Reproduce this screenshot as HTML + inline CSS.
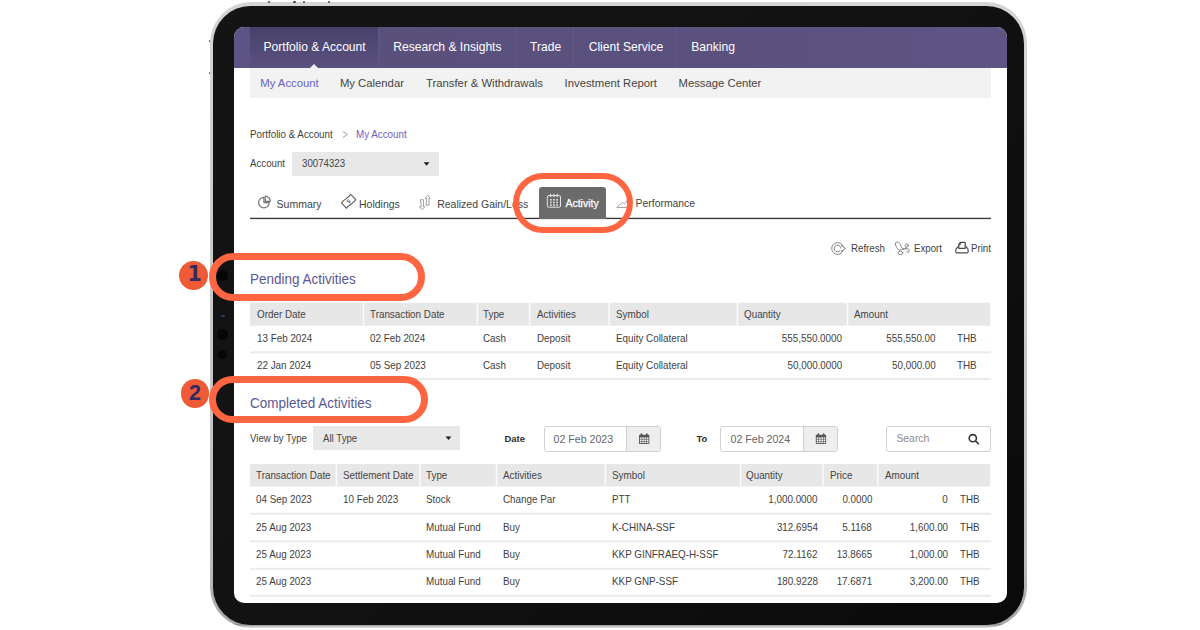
<!DOCTYPE html>
<html lang="en">
<head>
<meta charset="utf-8">
<title>Activity</title>
<style>
*{box-sizing:border-box;margin:0;padding:0}
html,body{width:1200px;height:630px;overflow:hidden;background:#fff}
body{position:relative;font-family:"Liberation Sans",sans-serif;color:#3f3f3f;font-size:9.85px}
.abs{position:absolute}
.t{position:absolute;white-space:nowrap;line-height:1;transform:translateY(-50%) scaleX(var(--sx,1));transform-origin:left center}
.n{font-size:10.3px;--sx:.956}
/* device */
#dev-outer{left:209.6px;top:1.8px;width:817.5px;height:626.7px;border-radius:41px;background:linear-gradient(180deg,#d3d5d6 0%,#c6c8c9 55%,#b9bbbd 90%,#a4a6a8 99.3%,#8f9193 99.45%,#e6e6e6 100%)}
#dev-black{left:213.4px;top:5.8px;width:810.4px;height:619px;border-radius:37.5px;background:linear-gradient(135deg,#141414 0%,#121212 45%,#0a0a0a 100%)}
#screen{left:234px;top:27px;width:773px;height:576px;border-radius:10px;background:#fff;overflow:hidden}
/* inside screen coordinates are page coords minus (234,27); use wrapper shifted */
#pg{position:absolute;left:-234px;top:-27px;width:1200px;height:630px}
#nav{left:234px;top:27px;width:773px;height:40.6px;background:linear-gradient(90deg,#5d5485 0,#5d5485 16px,#5a507c 150px,#5b517e 520px,#5e5585 100%)}
#nav .tab{position:absolute;top:0;height:41px;border-right:1px solid #61578a}
#nav .act{background:linear-gradient(180deg,#47416a 0%,#5b5180 100%);border-right:1px solid #61578a}
#nav .t{color:#fff;font-size:12.1px;top:20px}
#sub{left:250px;top:68px;width:741px;height:30px;background:#f2f2f2}
#sub .t{font-size:11.3px;top:15.8px;color:#444}
.pur{color:#6a5fc4 !important}
.c{color:#444}
.r{text-align:right;transform-origin:right center}
.ring{position:absolute;border:7.2px solid #ff6540;border-radius:32px}
.badge{position:absolute;width:29px;height:29px;border-radius:50%;background:#ee5b36;color:#342a62;font-weight:700;font-size:20px;text-align:center;line-height:28px;text-indent:3.4px;font-family:"DejaVu Sans","Liberation Sans",sans-serif}
.inp{position:absolute;border:1px solid #d0d0d0;border-radius:3px;background:#fff;height:26px;top:426px}
.addon{position:absolute;top:0;bottom:0;right:0;background:#eee;border-left:1px solid #d0d0d0;border-radius:0 2px 2px 0}
</style>
</head>
<body>
<div class="abs" id="dev-outer"></div>
<div class="abs" id="dev-black"></div>
<div class="abs" style="left:217px;top:270.1px;width:11px;height:11px;border-radius:50%;background:#060606"></div>
<div class="abs" style="left:218.2px;top:349.9px;width:9px;height:9px;border-radius:50%;background:#070707"></div>
<div class="abs" style="left:217px;top:329.1px;width:11px;height:11px;border-radius:50%;background:#060606"></div>
<div class="abs" style="left:221.2px;top:314.6px;width:3.6px;height:2px;background:#1d3e6e;border-radius:1px"></div>
<div class="abs" style="left:267.7px;top:1.4px;width:2.2px;height:1.8px;background:#444;border-radius:1px"></div>
<div class="abs" style="left:293.4px;top:1.4px;width:2.2px;height:1.8px;background:#444;border-radius:1px"></div>
<div class="abs" style="left:302.7px;top:1.4px;width:2.2px;height:1.8px;background:#444;border-radius:1px"></div>
<div class="abs" style="left:328.3px;top:1.4px;width:2.2px;height:1.8px;background:#444;border-radius:1px"></div>
<div class="abs" style="left:208.9px;top:40.4px;width:1.6px;height:2px;background:#555;border-radius:1px"></div>
<div class="abs" style="left:208.9px;top:72px;width:1.6px;height:2px;background:#555;border-radius:1px"></div>
<div class="abs" id="screen"><div id="pg">
<svg class="abs" style="left:0;top:0" width="1200" height="630" viewBox="0 0 1200 630">
<!-- dividers -->
<g stroke="none">
<rect x="250" y="217.75" width="741" height="1.35" fill="#383838"/>
<rect x="250" y="302.8" width="740.2" height="22.8" fill="#e7e7e7"/>
<rect x="362.75" y="302.3" width="1.5" height="23.8" fill="#fbfbfb"/>
<rect x="476.55" y="302.3" width="1.5" height="23.8" fill="#fbfbfb"/>
<rect x="528.95" y="302.3" width="1.5" height="23.8" fill="#fbfbfb"/>
<rect x="608.45" y="302.3" width="1.5" height="23.8" fill="#fbfbfb"/>
<rect x="736.65" y="302.3" width="1.5" height="23.8" fill="#fbfbfb"/>
<rect x="846.75" y="302.3" width="1.5" height="23.8" fill="#fbfbfb"/>
<rect x="250" y="463.9" width="740.2" height="22.5" fill="#e7e7e7"/>
<rect x="335.55" y="463.4" width="1.5" height="23.5" fill="#fbfbfb"/>
<rect x="419.25" y="463.4" width="1.5" height="23.5" fill="#fbfbfb"/>
<rect x="495.75" y="463.4" width="1.5" height="23.5" fill="#fbfbfb"/>
<rect x="604.55" y="463.4" width="1.5" height="23.5" fill="#fbfbfb"/>
<rect x="739.85" y="463.4" width="1.5" height="23.5" fill="#fbfbfb"/>
<rect x="822.15" y="463.4" width="1.5" height="23.5" fill="#fbfbfb"/>
<rect x="877.05" y="463.4" width="1.5" height="23.5" fill="#fbfbfb"/>
<rect x="250" y="351.3" width="741" height="2" fill="#ebebeb"/>
<rect x="250" y="378.0" width="741" height="2" fill="#ebebeb"/>
<rect x="250" y="512.8" width="741" height="2" fill="#ebebeb"/>
<rect x="250" y="540.3" width="741" height="2" fill="#ebebeb"/>
<rect x="250" y="567.8" width="741" height="2" fill="#ebebeb"/>
<rect x="250" y="594.8" width="741" height="2" fill="#ebebeb"/>
</g>
</svg>

<!-- NAV -->
<div class="abs" id="nav">
  <div class="tab act" style="left:16px;width:129px"><span class="t" style="left:13.5px">Portfolio &amp; Account</span>
    <div style="position:absolute;left:60px;bottom:0;width:0;height:0;border-left:4.5px solid transparent;border-right:4.5px solid transparent;border-bottom:4.5px solid #f2f2f2"></div></div>
  <div class="tab" style="left:145px;width:137px"><span class="t" style="left:14.3px">Research &amp; Insights</span></div>
  <div class="tab" style="left:282px;width:58px"><span class="t" style="left:14px">Trade</span></div>
  <div class="tab" style="left:340px;width:103px"><span class="t" style="left:14.7px">Client Service</span></div>
  <div class="tab" style="left:443px;width:72px;border-right:none"><span class="t" style="left:14.3px">Banking</span></div>
</div>
<div class="abs" id="sub">
  <span class="t pur" style="left:10.3px">My Account</span>
  <span class="t" style="left:89.9px">My Calendar</span>
  <span class="t" style="left:176px">Transfer &amp; Withdrawals</span>
  <span class="t" style="left:314.6px">Investment Report</span>
  <span class="t" style="left:428.5px">Message Center</span>
</div>

<!-- BREADCRUMB -->
<span class="t" style="left:249.8px;top:135px;font-size:10.3px;--sx:.951">Portfolio &amp; Account</span>
<span class="t pur" style="left:355.5px;top:135px;font-size:10.3px;--sx:.951">My Account</span>

<!-- ACCOUNT SELECT -->
<span class="t" style="left:250px;top:164.2px;font-size:10.2px;--sx:.95">Account</span>
<div class="abs" style="left:292px;top:152px;width:147px;height:24px;background:#e8e8e8"></div>
<span class="t" style="left:301.8px;top:164.2px;font-size:10.2px;--sx:.95;color:#444">30074323</span>

<!-- TABS -->
<span class="t" style="left:276.6px;top:204px;font-size:10.5px;color:#424242">Summary</span>
<span class="t" style="left:359px;top:204px;font-size:10.5px;color:#424242">Holdings</span>
<span class="t" style="left:437.2px;top:204px;font-size:10.5px;color:#424242">Realized Gain/Loss</span>
<div class="abs" style="left:539px;top:187px;width:67px;height:31.5px;background:#6b6b6b;border-radius:3px 3px 0 0"></div>
<span class="t" style="left:565.4px;top:202.8px;font-size:10.5px;color:#fff;-webkit-text-stroke:0.25px #fff">Activity</span>
<span class="t" style="left:635.6px;top:204px;font-size:10.4px;color:#424242">Performance</span>

<!-- TOOLBAR -->
<span class="t" style="left:850.7px;top:248.7px;font-size:10.1px;--sx:.96;color:#424242">Refresh</span>
<span class="t" style="left:914.2px;top:248.7px;font-size:10.1px;--sx:.96;color:#424242">Export</span>
<span class="t" style="left:971.2px;top:248.7px;font-size:10.1px;--sx:.96;color:#424242">Print</span>

<!-- PENDING -->
<span class="t" style="left:250px;top:278.5px;font-size:14px;--sx:.964;color:#5b5795">Pending Activities</span>

<span class="n t c" style="left:256.5px;top:314.5px">Order Date</span>
<span class="n t c" style="left:369.8px;top:314.5px">Transaction Date</span>
<span class="n t c" style="left:483.2px;top:314.5px">Type</span>
<span class="n t c" style="left:536.7px;top:314.5px">Activities</span>
<span class="n t c" style="left:615.7px;top:314.5px">Symbol</span>
<span class="n t c" style="left:744px;top:314.5px">Quantity</span>
<span class="n t c" style="left:854.3px;top:314.5px">Amount</span>

<span class="n t" style="left:256.5px;top:338.6px">13 Feb 2024</span>
<span class="n t" style="left:369.8px;top:338.6px">02 Feb 2024</span>
<span class="n t" style="left:483.2px;top:338.6px">Cash</span>
<span class="n t" style="left:536.7px;top:338.6px">Deposit</span>
<span class="n t" style="left:615.7px;top:338.6px">Equity Collateral</span>
<span class="n t r" style="right:357.7px;top:338.6px">555,550.0000</span>
<span class="n t r" style="right:264px;top:338.6px">555,550.00</span>
<span class="n t" style="left:956.6px;top:338.6px">THB</span>
<span class="n t" style="left:256.5px;top:365.5px">22 Jan 2024</span>
<span class="n t" style="left:369.8px;top:365.5px">05 Sep 2023</span>
<span class="n t" style="left:483.2px;top:365.5px">Cash</span>
<span class="n t" style="left:536.7px;top:365.5px">Deposit</span>
<span class="n t" style="left:615.7px;top:365.5px">Equity Collateral</span>
<span class="n t r" style="right:357.7px;top:365.5px">50,000.0000</span>
<span class="n t r" style="right:264px;top:365.5px">50,000.00</span>
<span class="n t" style="left:956.6px;top:365.5px">THB</span>

<!-- COMPLETED -->
<span class="t" style="left:250px;top:402.7px;font-size:14px;--sx:.964;color:#5b5795">Completed Activities</span>
<span class="t" style="left:250px;top:438.6px;font-size:10.1px;--sx:.955">View by Type</span>
<div class="abs" style="left:313px;top:426.2px;width:147.4px;height:24.3px;background:#e8e8e8"></div>
<span class="t" style="left:322.8px;top:438.6px;font-size:10.2px;--sx:.95;color:#444">All Type</span>

<span class="t" style="left:504.6px;top:438.5px;font-size:9.4px;font-weight:700;color:#2e2e2e">Date</span>
<div class="inp" style="left:543.5px;width:117.7px"><div class="addon" style="width:34px"></div></div>
<span class="t" style="left:553.6px;top:439px;font-size:10.6px;color:#666">02 Feb 2023</span>
<span class="t" style="left:696.5px;top:438.5px;font-size:9.4px;font-weight:700;color:#2e2e2e">To</span>
<div class="inp" style="left:720px;width:118px"><div class="addon" style="width:34px"></div></div>
<span class="t" style="left:730.6px;top:439px;font-size:10.6px;color:#666">02 Feb 2024</span>
<div class="inp" style="left:886px;width:104.6px"></div>
<span class="t" style="left:896.4px;top:439px;font-size:10.4px;color:#8a8a8a">Search</span>

<span class="n t c" style="left:256.4px;top:475.7px">Transaction Date</span>
<span class="n t c" style="left:343.4px;top:475.7px">Settlement Date</span>
<span class="n t c" style="left:426.4px;top:475.7px">Type</span>
<span class="n t c" style="left:502.8px;top:475.7px">Activities</span>
<span class="n t c" style="left:611.7px;top:475.7px">Symbol</span>
<span class="n t c" style="left:745.8px;top:475.7px">Quantity</span>
<span class="n t c" style="left:830px;top:475.7px">Price</span>
<span class="n t c" style="left:884.6px;top:475.7px">Amount</span>

<span class="n t" style="left:256.4px;top:499.5px">04 Sep 2023</span>
<span class="n t" style="left:343.4px;top:499.5px">10 Feb 2023</span>
<span class="n t" style="left:426.4px;top:499.5px">Stock</span>
<span class="n t" style="left:502.8px;top:499.5px">Change Par</span>
<span class="n t" style="left:611.7px;top:499.5px">PTT</span>
<span class="n t r" style="right:382.5px;top:499.5px">1,000.0000</span>
<span class="n t r" style="right:328px;top:499.5px">0.0000</span>
<span class="n t r" style="right:252px;top:499.5px">0</span>
<span class="n t" style="left:960.4px;top:499.5px">THB</span>

<span class="n t" style="left:256.4px;top:527.6px">25 Aug 2023</span>
<span class="n t" style="left:426.4px;top:527.6px">Mutual Fund</span>
<span class="n t" style="left:502.8px;top:527.6px">Buy</span>
<span class="n t" style="left:611.7px;top:527.6px">K-CHINA-SSF</span>
<span class="n t r" style="right:382.5px;top:527.6px">312.6954</span>
<span class="n t r" style="right:328px;top:527.6px">5.1168</span>
<span class="n t r" style="right:252px;top:527.6px">1,600.00</span>
<span class="n t" style="left:960.4px;top:527.6px">THB</span>

<span class="n t" style="left:256.4px;top:554.5px">25 Aug 2023</span>
<span class="n t" style="left:426.4px;top:554.5px">Mutual Fund</span>
<span class="n t" style="left:502.8px;top:554.5px">Buy</span>
<span class="n t" style="left:611.7px;top:554.5px">KKP GINFRAEQ-H-SSF</span>
<span class="n t r" style="right:382.5px;top:554.5px">72.1162</span>
<span class="n t r" style="right:328px;top:554.5px">13.8665</span>
<span class="n t r" style="right:252px;top:554.5px">1,000.00</span>
<span class="n t" style="left:960.4px;top:554.5px">THB</span>

<span class="n t" style="left:256.4px;top:581.8px">25 Aug 2023</span>
<span class="n t" style="left:426.4px;top:581.8px">Mutual Fund</span>
<span class="n t" style="left:502.8px;top:581.8px">Buy</span>
<span class="n t" style="left:611.7px;top:581.8px">KKP GNP-SSF</span>
<span class="n t r" style="right:382.5px;top:581.8px">180.9228</span>
<span class="n t r" style="right:328px;top:581.8px">17.6871</span>
<span class="n t r" style="right:252px;top:581.8px">3,200.00</span>
<span class="n t" style="left:960.4px;top:581.8px">THB</span>


<!-- ICONS -->
<svg class="abs" style="left:0;top:0" width="1200" height="630" viewBox="0 0 1200 630" fill="none" stroke-linecap="round" stroke-linejoin="round">
<polygon points="423.6,162.2 429.5,162.2 426.55,165.7" fill="#1e1e1e" stroke="none"/>
<polygon points="445.5,436.6 451.4,436.6 448.45,440.1" fill="#1e1e1e" stroke="none"/>
<path d="M343.2 131.7 L347.4 134.5 L343.2 137.3" stroke="#9a9a9a" stroke-width="0.9"/>
<!-- summary pie -->
<g stroke="#737373" stroke-width="1.2">
<path d="M263.9 197.3 A5.3 5.3 0 1 0 269.2 202.6 L263.9 202.6 Z"/>
<path d="M265.2 196.2 A5.2 5.2 0 0 1 270.4 201.4 L265.2 201.4 Z"/>
</g>
<!-- holdings banknote -->
<g transform="translate(348.65 201.3) rotate(-43)" stroke="#5e5e5e" stroke-width="1.1">
<path d="M-6.3 -3.7 C-2.5 -5.2 2.5 -2.2 6.3 -3.7 L6.3 3.7 C2.5 5.2 -2.5 2.2 -6.3 3.7 Z"/>
<text x="0" y="2" font-size="5.6" font-weight="700" font-family="Liberation Sans, sans-serif" text-anchor="middle" fill="#666" stroke="none">$</text>
</g>
<!-- realized arrows -->
<g stroke="#a2a2a2" stroke-width="1">
<path d="M420.85 199.7 L423.45 199.7 L423.45 206.8 L424.8 206.8 L422.15 209.8 L419.5 206.8 L420.85 206.8 Z"/>
<path d="M426.4 205.2 L429 205.2 L429 198.3 L430.3 198.3 L427.7 195.3 L425.1 198.3 L426.4 198.3 Z"/>
</g>
<!-- activity calendar -->
<g stroke="#e6e6e6" stroke-width="1">
<rect x="547.3" y="195.6" width="13.2" height="11.6" rx="1.2"/>
<path d="M550.6 194.4v2.2M553.9 194.4v2.2M557.2 194.4v2.2" stroke-width="1.2"/>
</g>
<g fill="#e0e0e0">
<rect x="550" y="199" width="1.7" height="1.6"/><rect x="553.1" y="199" width="1.7" height="1.6"/><rect x="556.2" y="199" width="1.7" height="1.6"/>
<rect x="550" y="201.6" width="1.7" height="1.6"/><rect x="553.1" y="201.6" width="1.7" height="1.6"/><rect x="556.2" y="201.6" width="1.7" height="1.6"/>
<rect x="550" y="204.2" width="1.7" height="1.6"/><rect x="553.1" y="204.2" width="1.7" height="1.6"/><rect x="556.2" y="204.2" width="1.7" height="1.6"/>
</g>
<!-- performance chart -->
<path d="M617 207.2 L622.6 202.4 L624.4 203.8 L628.2 199.6 L630 207.2 Z" stroke="#9a9a9a" stroke-width="0.9"/>
<!-- refresh -->
<g stroke="#808080" stroke-width="1">
<circle cx="837.6" cy="248.5" r="5.9"/>
<path d="M841 248.4 A3.4 3.4 0 1 0 840 250.9"/>
<path d="M841.4 245.6 L845.6 248.5 L841.4 251" fill="#fff"/>
</g>
<!-- export -->
<g stroke="#858585" stroke-width="1">
<path d="M895.3 243.7 C895.3 242.4 896.4 242 897.3 242.1 C898.8 242.3 899.6 243.2 900.2 244.3 C900.9 245.6 901.2 246.8 901.8 247.8 C902.4 248.6 903.2 248.8 904.3 248.8 L908.1 248.8 C909 249.2 909.3 250 909.1 250.7 C909 251.8 908.8 252.4 908.3 252.6 C907.6 252.6 907.2 252 906.9 251.3"/>
<path d="M895.3 243.7 C895.4 245.2 896 246.5 896.7 247.5 C897.4 248.5 898.2 249.4 898.9 250.1 C900.5 250 902.8 249.3 904.3 248.8"/>
<ellipse cx="900.4" cy="252.9" rx="2.4" ry="1.75"/>
<circle cx="906.7" cy="245.5" r="1.6"/>
<path d="M906.4 247.1 L905.4 248.8"/>
</g>
<!-- print -->
<g stroke="#4a4a4a" stroke-width="1.15">
<path d="M958.8 248.4 L958.8 244.4 L960.6 242.3 L965.2 242.3 L965.2 248.4 Z"/>
<path d="M958.8 246 L956.2 248.6 C955.8 249 955.8 249.6 955.8 250 L955.8 252 C955.8 252.5 956.2 252.8 956.6 252.8 L967.2 252.8 C967.8 252.8 968.1 252.4 968.1 252 L968.1 249.6 C968.1 249 967.8 248.7 967.6 248.4 L965.2 246"/>
<path d="M958.8 244.4 L960.6 244.4 L960.6 242.3 Z" fill="#333" stroke-width="0.5"/>
</g>
<!-- fa calendar icons -->
<g>
<rect x="639" y="434.8" width="10.3" height="9.2" rx="0.8" fill="#555"/>
<rect x="640.6" y="433.3" width="1.7" height="2.8" rx="0.8" fill="#555"/><rect x="646" y="433.3" width="1.7" height="2.8" rx="0.8" fill="#555"/>
<g fill="#f4f4f4">
<rect x="639.9" y="437.4" width="1.7" height="1.5"/><rect x="642.2" y="437.4" width="1.7" height="1.5"/><rect x="644.5" y="437.4" width="1.7" height="1.5"/><rect x="646.8" y="437.4" width="1.7" height="1.5"/>
<rect x="639.9" y="439.5" width="1.7" height="1.5"/><rect x="642.2" y="439.5" width="1.7" height="1.5"/><rect x="644.5" y="439.5" width="1.7" height="1.5"/><rect x="646.8" y="439.5" width="1.7" height="1.5"/>
<rect x="639.9" y="441.6" width="1.7" height="1.5"/><rect x="642.2" y="441.6" width="1.7" height="1.5"/><rect x="644.5" y="441.6" width="1.7" height="1.5"/><rect x="646.8" y="441.6" width="1.7" height="1.5"/>
</g>
</g>
<g transform="translate(176.8 0)">
<rect x="639" y="434.8" width="10.3" height="9.2" rx="0.8" fill="#555"/>
<rect x="640.6" y="433.3" width="1.7" height="2.8" rx="0.8" fill="#555"/><rect x="646" y="433.3" width="1.7" height="2.8" rx="0.8" fill="#555"/>
<g fill="#f4f4f4">
<rect x="639.9" y="437.4" width="1.7" height="1.5"/><rect x="642.2" y="437.4" width="1.7" height="1.5"/><rect x="644.5" y="437.4" width="1.7" height="1.5"/><rect x="646.8" y="437.4" width="1.7" height="1.5"/>
<rect x="639.9" y="439.5" width="1.7" height="1.5"/><rect x="642.2" y="439.5" width="1.7" height="1.5"/><rect x="644.5" y="439.5" width="1.7" height="1.5"/><rect x="646.8" y="439.5" width="1.7" height="1.5"/>
<rect x="639.9" y="441.6" width="1.7" height="1.5"/><rect x="642.2" y="441.6" width="1.7" height="1.5"/><rect x="644.5" y="441.6" width="1.7" height="1.5"/><rect x="646.8" y="441.6" width="1.7" height="1.5"/>
</g>
</g>
<!-- magnifier -->
<g stroke="#333" stroke-width="1.6">
<circle cx="972.8" cy="438.2" r="3.6"/>
<path d="M975.6 441 L978.4 443.8"/>
</g>
</svg>
</div></div>

<!-- ANNOTATIONS -->
<div class="ring" style="left:512.5px;top:173px;width:120px;height:60px;border-width:6.2px;border-radius:30px"></div>
<div class="ring" style="left:208.7px;top:252.7px;width:216.8px;height:48.5px;border-radius:24.3px"></div>
<div class="ring" style="left:208.7px;top:375.6px;width:219.1px;height:47.2px;border-radius:23.6px"></div>
<div class="badge" style="left:178.9px;top:260.7px;font-size:20.5px;text-indent:2.6px;line-height:26px">1</div>
<div class="badge" style="left:180.8px;top:379.4px;width:28.6px;height:28.6px;text-indent:-0.4px;line-height:28.4px;font-family:'Liberation Sans',sans-serif;font-size:21.6px">2</div>
</body>
</html>
